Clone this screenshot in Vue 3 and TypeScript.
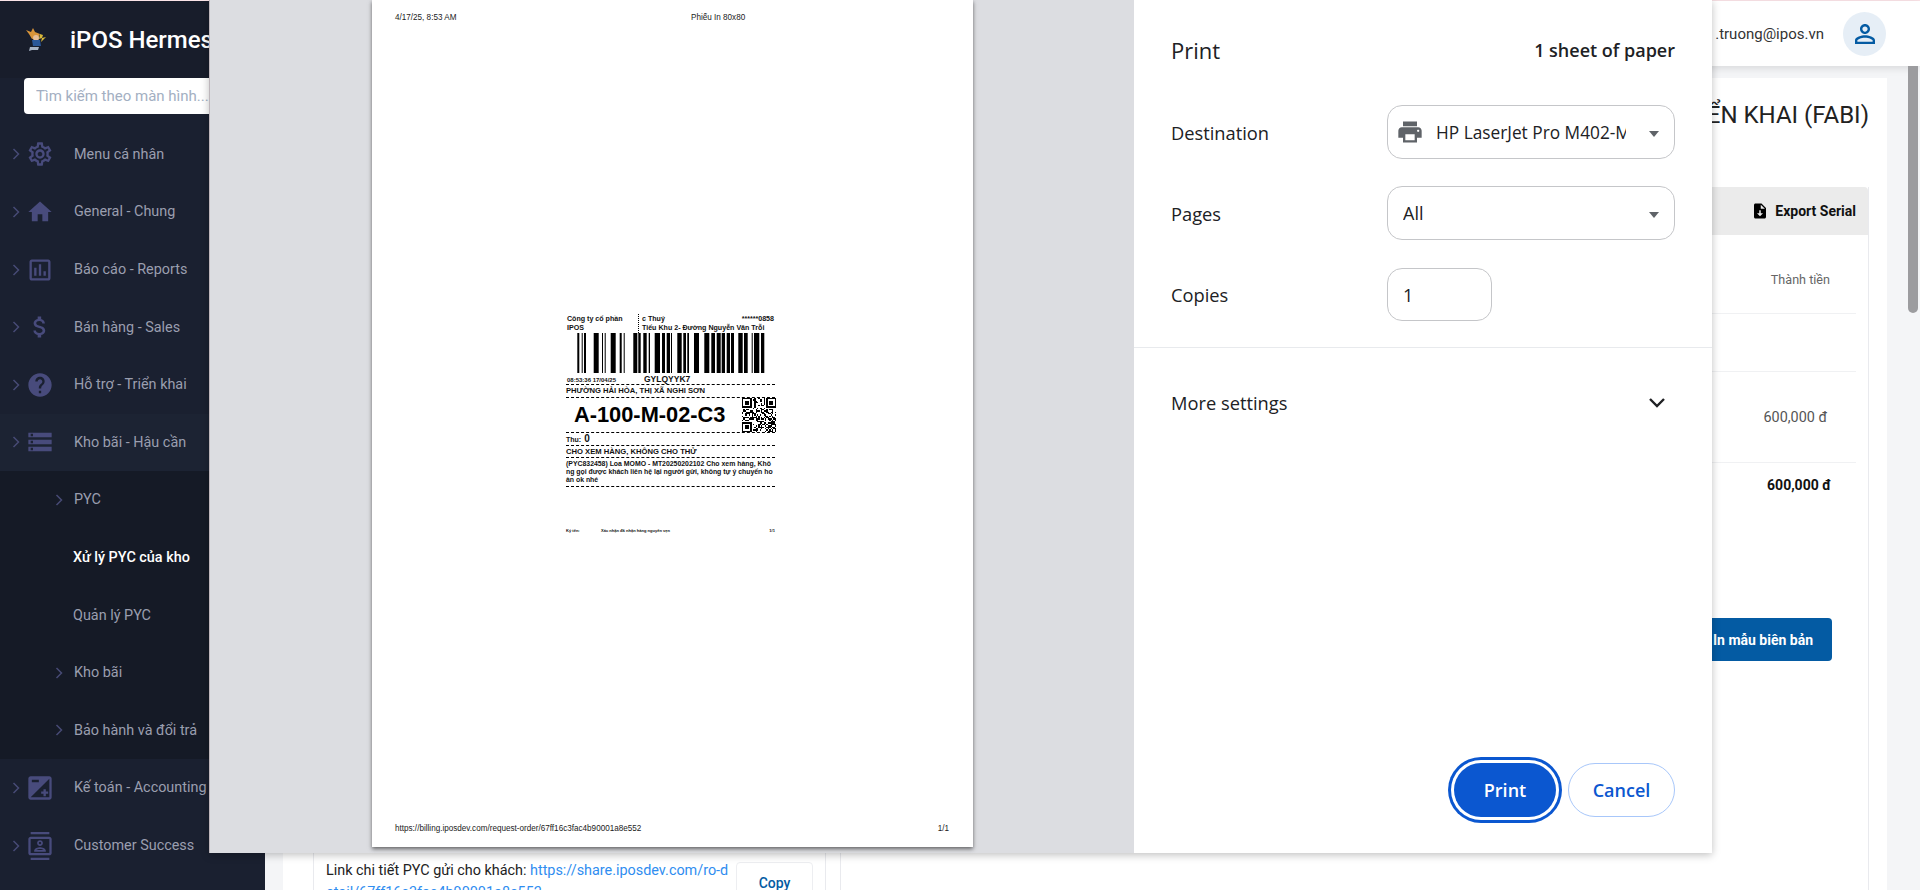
<script setup lang="ts">
interface MenuItem {
  label: string
  icon: string
  chevron: boolean
}

const menu: MenuItem[] = [
  { label: 'Menu cá nhân', chevron: true, icon: 'M19.43 12.98c.04-.32.07-.64.07-.98 0-.34-.03-.66-.07-.98l2.11-1.65c.19-.15.24-.42.12-.64l-2-3.46c-.09-.16-.26-.25-.44-.25-.06 0-.12.01-.17.03l-2.49 1c-.52-.4-1.08-.73-1.69-.98l-.38-2.65C14.46 2.18 14.25 2 14 2h-4c-.25 0-.46.18-.49.42l-.38 2.65c-.61.25-1.17.59-1.69.98l-2.49-1c-.06-.02-.12-.03-.18-.03-.17 0-.34.09-.43.25l-2 3.46c-.13.22-.07.49.12.64l2.11 1.65c-.04.32-.07.65-.07.98 0 .33.03.66.07.98l-2.11 1.65c-.19.15-.24.42-.12.64l2 3.46c.09.16.26.25.44.25.06 0 .12-.01.17-.03l2.49-1c.52.4 1.08.73 1.69.98l.38 2.65c.03.24.24.42.49.42h4c.25 0 .46-.18.49-.42l.38-2.65c.61-.25 1.17-.59 1.69-.98l2.49 1c.06.02.12.03.18.03.17 0 .34-.09.43-.25l2-3.46c.12-.22.07-.49-.12-.64l-2.11-1.65zm-1.98-1.71c.04.31.05.52.05.73 0 .21-.02.43-.05.73l-.14 1.13.89.7 1.08.84-.7 1.21-1.27-.51-1.04-.42-.9.68c-.43.32-.84.56-1.25.73l-1.06.43-.16 1.13-.2 1.35h-1.4l-.19-1.35-.16-1.13-1.06-.43c-.43-.18-.83-.41-1.23-.71l-.91-.7-1.06.43-1.27.51-.7-1.21 1.08-.84.89-.7-.14-1.13c-.03-.31-.05-.54-.05-.74s.02-.43.05-.73l.14-1.13-.89-.7-1.08-.84.7-1.21 1.27.51 1.04.42.9-.68c.43-.32.84-.56 1.25-.73l1.06-.43.16-1.13.2-1.35h1.39l.19 1.35.16 1.13 1.06.43c.43.18.83.41 1.23.71l.91.7 1.06-.43 1.27-.51.7 1.21-1.07.85-.89.7.14 1.13zM12 8c-2.21 0-4 1.79-4 4s1.79 4 4 4 4-1.79 4-4-1.79-4-4-4zm0 6c-1.1 0-2-.9-2-2s.9-2 2-2 2 .9 2 2-.9 2-2 2z' },
  { label: 'General - Chung', chevron: true, icon: 'M10 20v-6h4v6h5v-8h3L12 3 2 12h3v8z' },
  { label: 'Báo cáo - Reports', chevron: true, icon: 'M19 3H5c-1.1 0-2 .9-2 2v14c0 1.1.9 2 2 2h14c1.1 0 2-.9 2-2V5c0-1.1-.9-2-2-2zm0 16H5V5h14v14zM7 10h2v7H7zm4-3h2v10h-2zm4 6h2v4h-2z' },
  { label: 'Bán hàng - Sales', chevron: true, icon: 'M11.8 10.9c-2.27-.59-3-1.2-3-2.15 0-1.09 1.01-1.85 2.7-1.85 1.78 0 2.44.85 2.5 2.1h2.21c-.07-1.72-1.12-3.3-3.21-3.81V3h-3v2.16c-1.94.42-3.5 1.68-3.5 3.61 0 2.31 1.91 3.46 4.7 4.13 2.5.6 3 1.48 3 2.41 0 .69-.49 1.79-2.7 1.79-2.06 0-2.87-.92-2.98-2.1h-2.2c.12 2.19 1.76 3.42 3.68 3.83V21h3v-2.15c1.95-.37 3.5-1.5 3.5-3.55 0-2.84-2.43-3.81-4.7-4.4z' },
  { label: 'Hỗ trợ - Triển khai', chevron: true, icon: 'M12 2C6.48 2 2 6.48 2 12s4.48 10 10 10 10-4.48 10-10S17.52 2 12 2zm1 17h-2v-2h2v2zm2.07-7.75l-.9.92C13.45 12.9 13 13.5 13 15h-2v-.5c0-1.1.45-2.1 1.17-2.83l1.24-1.26c.37-.36.59-.86.59-1.41 0-1.1-.9-2-2-2s-2 .9-2 2H8c0-2.21 1.79-4 4-4s4 1.79 4 4c0 .88-.36 1.68-.93 2.25z' },
  { label: 'Kho bãi - Hậu cần', chevron: true, icon: 'M2 20h20v-4H2v4zm2-3h2v2H4v-2zM2 4v4h20V4H2zm4 3H4V5h2v2zm-4 7h20v-4H2v4zm2-3h2v2H4v-2z' },
]

const subMenu = [
  { label: 'PYC', chevron: true, active: false },
  { label: 'Xử lý PYC của kho', chevron: false, active: true },
  { label: 'Quản lý PYC', chevron: false, active: false },
  { label: 'Kho bãi', chevron: true, active: false },
  { label: 'Bảo hành và đổi trả', chevron: true, active: false },
]

const menuBottom: MenuItem[] = [
  { label: 'Kế toán - Accounting', chevron: true, icon: 'M15 17v2h2v-2h2v-2h-2v-2h-2v2h-2v2h2zm5-15H4c-1.1 0-2 .9-2 2v16c0 1.1.9 2 2 2h16c1.1 0 2-.9 2-2V4c0-1.1-.9-2-2-2zM5 5h6v2H5V5zm15 15H4L20 4v16z' },
  { label: 'Customer Success', chevron: true, icon: 'M20 0H4v2h16V0zM4 24h16v-2H4v2zM20 4H4c-1.1 0-2 .9-2 2v12c0 1.1.9 2 2 2h16c1.1 0 2-.9 2-2V6c0-1.1-.9-2-2-2zm0 14H4V6h16v12zm-8-6c1.38 0 2.5-1.12 2.5-2.5S13.38 7 12 7 9.5 8.12 9.5 9.5 10.62 12 12 12zm0-3.5c.55 0 1 .45 1 1s-.45 1-1 1-1-.45-1-1 .45-1 1-1zM17 15.99c0-2.09-3.31-2.99-5-2.99s-5 .9-5 2.99V17h10v-1.01zM8.81 15.5c.61-.52 2.03-1 3.19-1 1.17 0 2.59.48 3.2 1H8.81z' },
]

// [x, width] cua tung vach, tinh tu mep trai ma vach
const bars: [number, number][] = [
  [0.3, 2], [4.7, 1], [7, 2], [16.7, 5], [25, 1], [27.7, 1], [33.7, 5], [42.7, 2], [46.7, 1],
  [56.3, 4], [61.3, 2.4], [66.3, 3.4], [71.7, 1.3], [77.7, 5.3], [85, 3], [89.7, 3.3],
  [94, 1], [100.3, 4.4], [106.3, 2.7], [110.3, 1.7], [117, 5], [127.3, 5], [134.3, 3.7],
  [139.7, 4], [144.7, 3.3], [149.7, 3.3], [154, 3], [161.3, 4.4], [167, 3.7], [174.7, 1],
  [177, 5.3], [184, 3.3],
]

const qrSize = 25

function inFinder(x: number, y: number): boolean {
  return (x < 8 && y < 8) || (x >= qrSize - 8 && y < 8) || (x < 8 && y >= qrSize - 8)
}

// cac o du lieu cua QR, sinh co dinh de lan nao cung giong nhau
const qrCells: { x: number; y: number }[] = []
let seed = 8321
for (let y = 0; y < qrSize; y++) {
  for (let x = 0; x < qrSize; x++) {
    seed = (seed * 1103515245 + 12345) & 0x7fffffff
    if (!inFinder(x, y) && (seed >> 16) % 100 < 52) qrCells.push({ x, y })
  }
}

const finders = [
  { x: 0, y: 0 },
  { x: qrSize - 7, y: 0 },
  { x: 0, y: qrSize - 7 },
]
</script>

<template>
  <div class="app">
    <div class="top-line"></div>
    <div class="shell">
      <aside class="sidebar">
        <div class="brand">
          <svg class="logo" width="24" height="26" viewBox="0 0 24 26">
            <path d="M1 3l5 2 2-4 2 4 5 2-2 4-6 1-3-5z" fill="#d9953a" />
            <path d="M15 7l3 1-1 3 4-1-5 5 1-4-3 1z" fill="#d8b83a" />
            <circle cx="11" cy="11" r="3" fill="#e8c09a" />
            <path d="M7 13h8l1 6H8z" fill="#2a5797" />
            <path d="M5 20h9l-1 3H7l-3 1z" fill="#a9b4c4" />
          </svg>
          <span class="brand-name">iPOS Hermes</span>
        </div>
        <div class="search-wrap">
          <input class="search" type="text" placeholder="Tìm kiếm theo màn hình..." />
        </div>
        <nav class="nav">
          <a v-for="item in menu" :key="item.label" class="nav-item" :class="{ current: item.label.startsWith('Kho') }">
            <svg class="chev" width="8" height="12" viewBox="0 0 8 12"><path d="M1.5 1l5 5-5 5" /></svg>
            <svg class="nav-icon" width="28" height="28" viewBox="0 0 24 24"><path :d="item.icon" /></svg>
            <span>{{ item.label }}</span>
          </a>
          <div class="sub-nav">
            <a v-for="sub in subMenu" :key="sub.label" class="sub-item" :class="{ active: sub.active }">
              <svg v-if="sub.chevron" class="chev sub-chev" width="8" height="12" viewBox="0 0 8 12"><path d="M1.5 1l5 5-5 5" /></svg>
              <span :class="{ flat: !sub.chevron }">{{ sub.label }}</span>
            </a>
          </div>
          <a v-for="item in menuBottom" :key="item.label" class="nav-item">
            <svg class="chev" width="8" height="12" viewBox="0 0 8 12"><path d="M1.5 1l5 5-5 5" /></svg>
            <svg class="nav-icon" width="28" height="28" viewBox="0 0 24 24"><path :d="item.icon" /></svg>
            <span>{{ item.label }}</span>
          </a>
        </nav>
      </aside>

      <main class="main">
        <header class="topbar">
          <span class="email">.truong@ipos.vn</span>
          <span class="avatar">
            <svg width="30" height="30" viewBox="0 0 24 24"><path d="M12 5.9c1.16 0 2.1.94 2.1 2.1s-.94 2.1-2.1 2.1S9.9 9.16 9.9 8s.94-2.1 2.1-2.1m0 9c2.97 0 6.1 1.46 6.1 2.1v1.1H5.9V17c0-.64 3.13-2.1 6.1-2.1M12 4C9.79 4 8 5.79 8 8s1.79 4 4 4 4-1.79 4-4-1.79-4-4-4zm0 9c-2.67 0-8 1.34-8 4v3h16v-3c0-2.66-5.33-4-8-4z" /></svg>
          </span>
        </header>
        <section class="card">
          <h1 class="title">TRIỂN KHAI (FABI)</h1>
          <div class="columns">
            <div class="left-col">
              <div class="link-row">
                <p class="link-text">Link chi tiết PYC gửi cho khách: <a>https://share.iposdev.com/ro-detail/67ff16c3fac4b90001a8e552</a></p>
                <button class="copy" type="button">Copy</button>
              </div>
            </div>
            <div class="right-col">
              <div class="panel-head">
                <svg width="18" height="18" viewBox="0 0 24 24"><path d="M14 2H6c-1.1 0-2 .9-2 2v16c0 1.1.9 2 2 2h12c1.1 0 2-.9 2-2V8l-6-6zm-2 17l-4-4h3v-4h2v4h3l-4 4zm1-10V3.5L18.5 9H13z" /></svg>
                <span>Export Serial</span>
              </div>
              <div class="panel-body">
                <div class="row row-head"><span>Thành tiền</span></div>
                <div class="row row-empty"></div>
                <div class="row row-price"><span>600,000 đ</span></div>
                <div class="row-total"><span>600,000 đ</span></div>
                <div class="actions"><button class="btn-primary" type="button">In mẫu biên bản</button></div>
              </div>
            </div>
          </div>
        </section>
      </main>
    </div>

    <div class="scroll-thumb"></div>

    <div class="print-dialog">
      <div class="preview">
        <div class="sheet">
          <div class="sheet-head">
            <span>4/17/25, 8:53 AM</span>
            <span>Phiếu In 80x80</span>
          </div>
          <div class="label">
            <div class="label-top">
              <div class="sender">Công ty cổ phần<br />IPOS</div>
              <div class="receiver">
                <div class="receiver-line"><span>c Thuý</span><span>******0858</span></div>
                <div>Tiểu Khu 2- Đường Nguyễn Văn Trỗi</div>
              </div>
            </div>
            <svg class="barcode" width="188" height="40" viewBox="0 0 188 40">
              <rect v-for="(b, i) in bars" :key="i" :x="b[0]" y="0" :width="b[1]" height="40" fill="#000" />
            </svg>
            <div class="code-row">
              <span class="stamp">08:53:36 17/04/25</span>
              <span class="code">GYLQYYK7</span>
            </div>
            <div class="ward">PHƯỜNG HẢI HÒA, THỊ XÃ NGHI SƠN</div>
            <div class="slot-row">
              <span class="slot">A-100-M-02-C3</span>
              <svg class="qr" width="34" height="34" :viewBox="`0 0 ${qrSize} ${qrSize}`" shape-rendering="crispEdges">
                <rect v-for="(c, i) in qrCells" :key="i" :x="c.x" :y="c.y" width="1" height="1" fill="#000" />
                <g v-for="f in finders" :key="`${f.x}-${f.y}`">
                  <rect :x="f.x + 0.5" :y="f.y + 0.5" width="6" height="6" fill="none" stroke="#000" />
                  <rect :x="f.x + 2" :y="f.y + 2" width="3" height="3" fill="#000" />
                </g>
              </svg>
            </div>
            <div class="cod"><span>Thu:</span> <b>0</b></div>
            <div class="note">CHO XEM HÀNG, KHÔNG CHO THỬ</div>
            <div class="desc">(PYC832458) Loa MOMO - MT20250202102 Cho xem hàng, Khô<br />ng gọi được khách liên hệ lại người gửi, không tự ý chuyển ho<br />àn ok nhé</div>
            <div class="sign">
              <span>Ký tên:</span>
              <span>Xác nhận đã nhận hàng nguyên vẹn</span>
              <span class="sign-page">1/1</span>
            </div>
          </div>
          <div class="sheet-foot">
            <span>https://billing.iposdev.com/request-order/67ff16c3fac4b90001a8e552</span>
            <span>1/1</span>
          </div>
        </div>
      </div>

      <div class="settings">
        <div class="settings-head">
          <span class="settings-title">Print</span>
          <span class="sheets">1 sheet of paper</span>
        </div>
        <div class="field">
          <span>Destination</span>
          <div class="select">
            <svg class="printer" width="28" height="28" viewBox="0 0 24 24"><path d="M19 8H5c-1.66 0-3 1.34-3 3v6h4v4h12v-4h4v-6c0-1.66-1.34-3-3-3zm-3 11H8v-5h8v5zm3-7c-.55 0-1-.45-1-1s.45-1 1-1 1 .45 1 1-.45 1-1 1zm-1-9H6v4h12V3z" /></svg>
            <span class="select-text printer-name">HP LaserJet Pro M402-M</span>
            <i class="caret"></i>
          </div>
        </div>
        <div class="field">
          <span>Pages</span>
          <div class="select select-plain">
            <span class="select-text">All</span>
            <i class="caret"></i>
          </div>
        </div>
        <div class="field field-copies">
          <span>Copies</span>
          <div class="select copies">1</div>
        </div>
        <div class="more">
          <span>More settings</span>
          <svg width="18" height="12" viewBox="0 0 18 12"><path d="M2 2l7 7 7-7" /></svg>
        </div>
        <div class="buttons">
          <button class="print-btn" type="button">Print</button>
          <button class="cancel-btn" type="button">Cancel</button>
        </div>
      </div>
    </div>
  </div>
</template>

<style>
html,
body {
  margin: 0;
  overflow: hidden;
}
</style>

<style scoped>
.app {
  position: relative;
  width: 1920px;
  height: 890px;
  overflow: hidden;
  display: flex;
  flex-direction: column;
  background: #f4f5f7;
  font-family: Roboto, sans-serif;
}

.top-line {
  height: 1px;
  flex: none;
  background: #fbe4e8;
}

.shell {
  flex: 1;
  display: flex;
  min-height: 0;
}

.sidebar {
  width: 265px;
  flex: none;
  background: #1a2030;
  color: #9a9eaf;
  font-size: 14.4px;
}

.brand {
  height: 77px;
  display: flex;
  align-items: center;
  padding-left: 25px;
  background: #181d2b;
}

.logo {
  margin-right: 21px;
}

.brand-name {
  font-size: 24px;
  font-weight: 500;
  color: #fff;
  white-space: nowrap;
}

.search-wrap {
  padding: 0 24px 11.6px;
}

.search {
  display: block;
  width: 100%;
  height: 36px;
  box-sizing: border-box;
  border: 0;
  border-radius: 4px;
  padding: 0 12px;
  background: #fff;
  font: 15px Roboto, sans-serif;
}

.search::placeholder {
  color: #a3afc2;
  opacity: 1;
}

.nav-item,
.sub-item {
  height: 57.6px;
  display: flex;
  align-items: center;
  white-space: nowrap;
}

.nav-item {
  padding-left: 12px;
}

.nav-item.current {
  background: #1c2333;
}

.chev {
  flex: none;
  fill: none;
  stroke: #474a75;
  stroke-width: 1.5;
}

.nav-icon {
  flex: none;
  margin: 0 20px 0 6px;
  fill: #484b7c;
}

.sub-nav {
  background: #151a26;
}

.sub-item {
  padding-left: 55px;
}

.sub-chev {
  margin-right: 11px;
}

.flat {
  margin-left: 18px;
}

.sub-item.active {
  color: #fff;
  font-weight: 500;
}

.main {
  flex: 1;
  min-width: 0;
  display: flex;
  flex-direction: column;
}

.topbar {
  height: 65px;
  flex: none;
  display: flex;
  align-items: center;
  justify-content: flex-end;
  padding-right: 34px;
  background: #fff;
  box-shadow: 0 2px 8px rgba(0, 0, 0, 0.12);
  position: relative;
}

.email {
  font-size: 15px;
  color: #333;
  margin-right: 19px;
}

.avatar {
  width: 43px;
  height: 44px;
  border-radius: 50%;
  background: #e6eef6;
  display: flex;
  align-items: center;
  justify-content: center;
  fill: #045ba3;
}

.card {
  flex: 1;
  margin: 12px 33px 0 18px;
  padding: 0 18px 0 30px;
  background: #fff;
  overflow: hidden;
}

.title {
  margin: 0;
  height: 109px;
  line-height: 74px;
  text-align: right;
  font-size: 24px;
  font-weight: 400;
  color: #222;
}

.columns {
  display: grid;
  grid-template-columns: 513px 1fr;
  column-gap: 14px;
}

.left-col {
  height: 800px;
  box-sizing: border-box;
  padding: 672px 12px 0;
  border: 1px solid #e9eaee;
  font-size: 14.4px;
  color: #222;
}

.link-row {
  display: flex;
  gap: 7px;
}

.link-text {
  margin: 0;
  width: 406px;
  line-height: 21.6px;
  word-break: break-all;
}

.link-text a {
  color: #2f8df0;
}

.copy {
  width: 77px;
  height: 42px;
  margin-top: 2px;
  flex: none;
  border: 1px solid #edeef1;
  border-radius: 4px;
  background: #fff;
  color: #045ba3;
  font: 500 14px Roboto, sans-serif;
}

.right-col {
  border-left: 1px solid #e9eaee;
  border-right: 1px solid #e9eaee;
  height: 800px;
}

.panel-head {
  height: 48px;
  display: flex;
  align-items: center;
  justify-content: flex-end;
  gap: 6px;
  padding-right: 12px;
  border-top-right-radius: 4px;
  background: #ebebeb;
  font-size: 14px;
  font-weight: 700;
  color: #111;
}

.panel-body {
  padding-right: 12px;
  font-size: 14px;
  color: #555;
}

.row {
  display: flex;
  align-items: center;
  justify-content: flex-end;
  padding-right: 29px;
  border-bottom: 1px solid #f0f1f3;
  box-sizing: border-box;
}

.row-head {
  height: 79px;
  padding-top: 10px;
  padding-right: 26px;
  font-size: 12.6px;
  color: #666;
}

.row-empty {
  height: 58px;
}

.row-price {
  height: 91px;
  font-size: 14.4px;
}

.row-total {
  padding: 14px 25px 0 0;
  text-align: right;
  font-weight: 700;
  color: #111;
}

.actions {
  margin-top: 125px;
  display: flex;
  justify-content: flex-end;
  padding-right: 24px;
}

.btn-primary {
  width: 172px;
  height: 43px;
  padding: 0 19px 0 0;
  text-align: right;
  border: 0;
  border-radius: 4px;
  background: #045ba3;
  color: #fff;
  font: 700 14px Roboto, sans-serif;
}

.scroll-thumb {
  position: absolute;
  left: 1908px;
  top: 66px;
  width: 10px;
  height: 247px;
  border-radius: 0 0 5px 5px;
  background: #9c9c9f;
}

.print-dialog {
  position: absolute;
  left: 209px;
  top: 0;
  width: 1503px;
  height: 853px;
  display: flex;
  border-left: 1px solid #bdb6bb;
  box-sizing: border-box;
  box-shadow: 0 2px 8px rgba(0, 0, 0, 0.25);
}

.preview {
  width: 924px;
  flex: none;
  background: #dcdde1;
  padding-left: 162px;
  box-sizing: border-box;
}

.sheet {
  width: 601px;
  height: 847px;
  box-sizing: border-box;
  padding: 13px 23px 13px;
  display: flex;
  flex-direction: column;
  background: #fff;
  box-shadow: 0 2px 4px rgba(0, 0, 0, 0.55);
  font-family: 'Liberation Sans', Arial, sans-serif;
  color: #222;
}

.sheet-head {
  display: grid;
  grid-template-columns: 296px 1fr;
  font-size: 8.15px;
  line-height: 10px;
}

.sheet-foot {
  margin-top: auto;
  display: flex;
  justify-content: space-between;
  font-size: 8.15px;
  line-height: 10px;
  padding-right: 1px;
}

.label {
  width: 209px;
  margin: 291px 0 0 171px;
  font-weight: 700;
  color: #111;
}

.label-top {
  display: grid;
  grid-template-columns: 73px 1fr;
  height: 19px;
  font-size: 7.1px;
  line-height: 9px;
}

.sender {
  border-right: 1px dotted #000;
  padding: 1px 0 0 1px;
}

.receiver {
  padding: 1px 1px 0 3px;
}

.receiver-line {
  display: flex;
  justify-content: space-between;
}

.barcode {
  display: block;
  margin: 0 0 0 11px;
}

.code-row {
  display: grid;
  grid-template-columns: 77px 1fr;
  height: 11px;
  align-items: end;
  padding-left: 1px;
}

.stamp {
  font-size: 6px;
  line-height: 8px;
}

.code {
  font-size: 8.5px;
  line-height: 10px;
}

.ward,
.note {
  font-size: 7.65px;
  line-height: 12px;
  border-top: 1px dashed #000;
}

.slot-row {
  height: 34px;
  display: flex;
  align-items: center;
  justify-content: space-between;
  border-top: 1px dashed #000;
  border-bottom: 1px dashed #000;
}

.slot {
  margin-left: 8px;
  font-size: 21.8px;
  color: #000;
}

.qr {
  margin-right: -1px;
}

.cod {
  height: 12px;
  font-size: 7px;
  line-height: 12px;
}

.cod b {
  font-size: 10px;
  margin-left: 1px;
}

.note {
  line-height: 11px;
  border-bottom: 1px dashed #000;
}

.desc {
  font-size: 6.9px;
  line-height: 8px;
  padding: 2px 0 2px;
  border-bottom: 1px dashed #000;
  white-space: nowrap;
}

.sign {
  margin-top: 42px;
  display: grid;
  grid-template-columns: 35px 1fr auto;
  font-size: 4.05px;
  line-height: 4px;
}

.settings {
  flex: 1;
  min-width: 0;
  display: flex;
  flex-direction: column;
  background: #fff;
  font-family: 'Open Sans', sans-serif;
  font-size: 18.3px;
  color: #202124;
}

.settings-head {
  height: 105px;
  box-sizing: border-box;
  padding: 35px 37px 0;
  display: flex;
  justify-content: space-between;
  line-height: 30px;
}

.settings-title {
  font-size: 22px;
}

.sheets {
  font-size: 18px;
  font-weight: 600;
}

.field {
  display: grid;
  grid-template-columns: 216px 288px;
  align-items: center;
  padding: 0 37px;
  height: 54px;
  margin-bottom: 27px;
}

.field-copies {
  margin-top: 1px;
  height: 53px;
}

.select {
  height: 54px;
  box-sizing: border-box;
  border: 1px solid #c5c6c9;
  border-radius: 15px;
  display: flex;
  align-items: center;
  padding-left: 8px;
  position: relative;
  font-size: 18px;
}

.select-plain {
  padding-left: 15px;
}

.printer {
  flex: none;
  fill: #5f6368;
  margin-right: 12px;
}

.select-text {
  width: 190px;
  overflow: hidden;
  white-space: nowrap;
}

.printer-name {
  font-size: 17.3px;
}

.caret {
  position: absolute;
  right: 15px;
  top: 25px;
  border: 5.5px solid transparent;
  border-top: 6px solid #5f6368;
  border-bottom: 0;
}

.copies {
  width: 105px;
  height: 53px;
  padding-left: 15px;
}

.more {
  margin-top: -1px;
  height: 109px;
  border-top: 1px solid #e8eaed;
  box-sizing: border-box;
  display: flex;
  align-items: center;
  justify-content: space-between;
  padding: 0 46px 0 37px;
}

.more svg {
  fill: none;
  stroke: #202124;
  stroke-width: 2.4;
  margin-top: 2px;
}

.buttons {
  margin-top: auto;
  padding: 0 37px 36px 0;
  display: flex;
  justify-content: flex-end;
  gap: 12px;
}

.print-btn,
.cancel-btn {
  height: 54px;
  border-radius: 27px;
  font: 600 18px 'Open Sans', sans-serif;
}

.print-btn {
  width: 102px;
  border: 0;
  background: #0b57d0;
  color: #fff;
  box-shadow: 0 0 0 3px #fff, 0 0 0 6px #0b57d0;
}

.cancel-btn {
  width: 107px;
  border: 1px solid #a8c7fa;
  background: #fff;
  color: #0b57d0;
}
</style>
